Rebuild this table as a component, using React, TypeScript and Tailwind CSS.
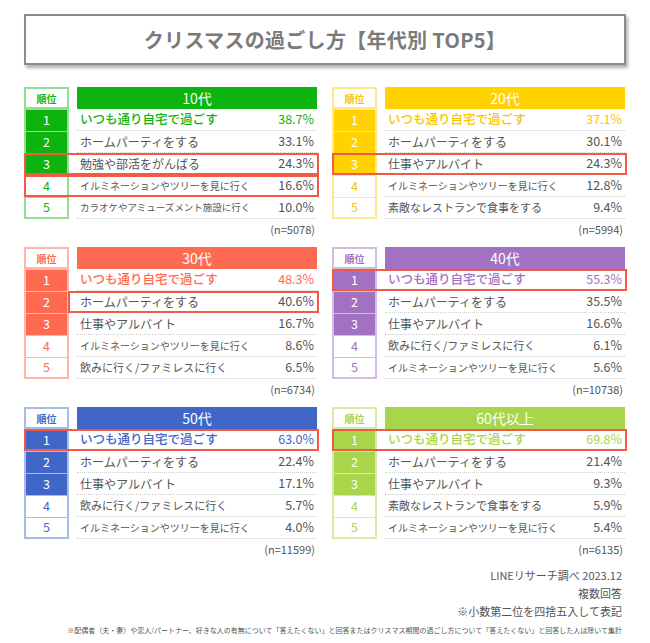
type Item = { label: string; pct: string; size?: string };

type Panel = {
  age: string;
  n: string;
  bg: string;
  fg: string;
  light: string;
  items: Item[];
  marks: { row: number; from: "rank" | "body" }[];
};

const panels: Panel[] = [
  {
    age: "10代",
    n: "(n=5078)",
    bg: "bg-[#0db40d]",
    fg: "text-[#0db40d]",
    light: "border-[#95dd95]",
    items: [
      { label: "いつも通り自宅で過ごす", pct: "38.7%" },
      { label: "ホームパーティをする", pct: "33.1%" },
      { label: "勉強や部活をがんばる", pct: "24.3%" },
      { label: "イルミネーションやツリーを見に行く", pct: "16.6%", size: "text-[10px]" },
      { label: "カラオケやアミューズメント施設に行く", pct: "10.0%", size: "text-[9.5px]" },
    ],
    marks: [
      { row: 2, from: "rank" },
      { row: 3, from: "rank" },
    ],
  },
  {
    age: "20代",
    n: "(n=5994)",
    bg: "bg-[#ffd200]",
    fg: "text-[#f6c500]",
    light: "border-[#ffe78a]",
    items: [
      { label: "いつも通り自宅で過ごす", pct: "37.1%" },
      { label: "ホームパーティをする", pct: "30.1%" },
      { label: "仕事やアルバイト", pct: "24.3%" },
      { label: "イルミネーションやツリーを見に行く", pct: "12.8%", size: "text-[10px]" },
      { label: "素敵なレストランで食事をする", pct: "9.4%", size: "text-[11px]" },
    ],
    marks: [{ row: 2, from: "rank" }],
  },
  {
    age: "30代",
    n: "(n=6734)",
    bg: "bg-[#ff6a52]",
    fg: "text-[#ff6a52]",
    light: "border-[#ffb5a8]",
    items: [
      { label: "いつも通り自宅で過ごす", pct: "48.3%" },
      { label: "ホームパーティをする", pct: "40.6%" },
      { label: "仕事やアルバイト", pct: "16.7%" },
      { label: "イルミネーションやツリーを見に行く", pct: "8.6%", size: "text-[10px]" },
      { label: "飲みに行く/ファミレスに行く", pct: "6.5%", size: "text-[11px]" },
    ],
    marks: [{ row: 1, from: "body" }],
  },
  {
    age: "40代",
    n: "(n=10738)",
    bg: "bg-[#a271c1]",
    fg: "text-[#a271c1]",
    light: "border-[#d4bbe4]",
    items: [
      { label: "いつも通り自宅で過ごす", pct: "55.3%" },
      { label: "ホームパーティをする", pct: "35.5%" },
      { label: "仕事やアルバイト", pct: "16.6%" },
      { label: "飲みに行く/ファミレスに行く", pct: "6.1%", size: "text-[11px]" },
      { label: "イルミネーションやツリーを見に行く", pct: "5.6%", size: "text-[10px]" },
    ],
    marks: [{ row: 0, from: "rank" }],
  },
  {
    age: "50代",
    n: "(n=11599)",
    bg: "bg-[#4066c8]",
    fg: "text-[#4066c8]",
    light: "border-[#a8bbe8]",
    items: [
      { label: "いつも通り自宅で過ごす", pct: "63.0%" },
      { label: "ホームパーティをする", pct: "22.4%" },
      { label: "仕事やアルバイト", pct: "17.1%" },
      { label: "飲みに行く/ファミレスに行く", pct: "5.7%", size: "text-[11px]" },
      { label: "イルミネーションやツリーを見に行く", pct: "4.0%", size: "text-[10px]" },
    ],
    marks: [{ row: 0, from: "rank" }],
  },
  {
    age: "60代以上",
    n: "(n=6135)",
    bg: "bg-[#a8d549]",
    fg: "text-[#a8d549]",
    light: "border-[#d6eca4]",
    items: [
      { label: "いつも通り自宅で過ごす", pct: "69.8%" },
      { label: "ホームパーティをする", pct: "21.4%" },
      { label: "仕事やアルバイト", pct: "9.3%" },
      { label: "素敵なレストランで食事をする", pct: "5.9%", size: "text-[11px]" },
      { label: "イルミネーションやツリーを見に行く", pct: "5.4%", size: "text-[10px]" },
    ],
    marks: [{ row: 0, from: "rank" }],
  },
];

function RankPanel({ p }: { p: Panel }) {
  return (
    <div className="w-[294px]">
      <div className="flex h-[22px] gap-2">
        <div
          className={`w-[45px] border-2 bg-white ${p.light} ${p.fg} flex items-center justify-center text-[10px] font-semibold`}
        >
          順位
        </div>
        <div className={`w-[240px] ${p.bg} flex items-center justify-center text-[14px] text-white`}>
          {p.age}
        </div>
      </div>
      {p.items.map((it, i) => {
        const top3 = i < 3;
        const mark = p.marks.find((m) => m.row === i);
        return (
          <div key={i} className="relative flex h-[22px] gap-2">
            <div
              className={`w-[45px] border-x-2 border-t ${i === 4 ? "border-b-2" : ""} ${p.light} ${
                top3 ? `${p.bg} text-white` : `bg-white ${p.fg}`
              } flex items-center justify-center text-[12.5px]`}
            >
              {i + 1}
            </div>
            <div className="flex w-[240px] items-center justify-between border-b border-dotted border-[#cfcfcf] pl-[3px] pr-[3px]">
              <span
                className={
                  i === 0
                    ? `${p.fg} text-[12.5px] font-medium`
                    : `text-[#555] ${it.size ?? "text-[12px]"}`
                }
              >
                {it.label}
              </span>
              <span className={`text-[12.5px] ${i === 0 ? p.fg : "text-[#555]"}`}>{it.pct}</span>
            </div>
            {mark && (
              <div
                className={`pointer-events-none absolute inset-y-0 right-[-1px] border-2 border-[#f05a46] ${
                  mark.from === "rank" ? "left-0" : "left-[44px]"
                }`}
              />
            )}
          </div>
        );
      })}
      <div className="flex h-[20px] items-center justify-end pr-[3px] text-[11px] text-[#555]">{p.n}</div>
    </div>
  );
}

export default function App() {
  return (
    <div
      className="h-[643px] w-[650px] bg-white px-6 pt-[14px]"
      style={{ fontFamily: '"Noto Sans CJK JP", "Noto Sans", sans-serif' }}
    >
      <div className="flex h-[51px] w-[602px] items-center justify-center border-2 border-[#8c8c8c] shadow-[2px_3px_3px_rgba(0,0,0,0.3)]">
        <h1 className="text-[20px] font-bold tracking-[0.3px] text-[#7a7a7a]">クリスマスの過ごし方【年代別 TOP5】</h1>
      </div>
      <div className="mt-[22px] grid w-[602px] grid-cols-2 gap-x-[14px] gap-y-2">
        {panels.map((p) => (
          <RankPanel key={p.age} p={p} />
        ))}
      </div>
      <div className="mt-[7px] flex w-[602px] flex-col items-end pr-1 text-[11px] leading-[18px] text-[#555]">
        <div>LINEリサーチ調べ 2023.12</div>
        <div>複数回答</div>
        <div>※小数第二位を四捨五入して表記</div>
      </div>
      <div className="mt-[3px] w-[602px] whitespace-nowrap pr-1 text-right text-[7px] leading-[14px] text-[#555]">
        ※配偶者（夫・妻）や恋人/パートナー、好きな人の有無について「答えたくない」と回答またはクリスマス期間の過ごし方について「答えたくない」と回答した人は除いて集計
      </div>
    </div>
  );
}
